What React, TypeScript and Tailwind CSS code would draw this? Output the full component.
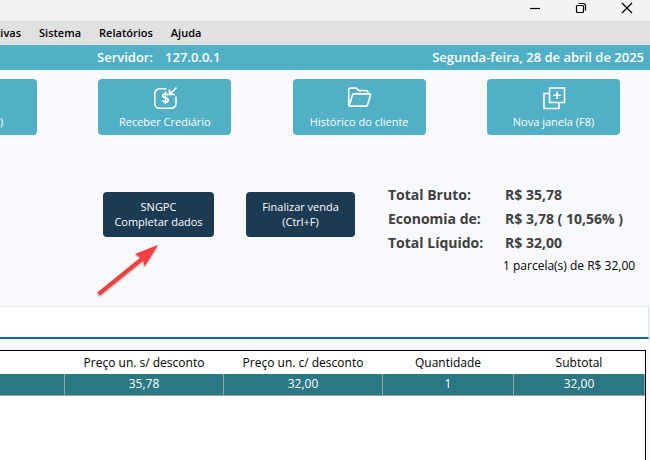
import type { ReactNode } from "react";

const columns = [
  { label: "Preço un. s/ desconto", value: "35,78", width: "w-[159px]" },
  { label: "Preço un. c/ desconto", value: "32,00", width: "w-[159px]" },
  { label: "Quantidade", value: "1", width: "w-[131px]" },
  { label: "Subtotal", value: "32,00", width: "w-[131px]" },
];

const totals = [
  { label: "Total Bruto:", value: "R$ 35,78" },
  { label: "Economia de:", value: "R$ 3,78 ( 10,56% )" },
  { label: "Total Líquido:", value: "R$ 32,00" },
];

export default function App() {
  return (
    <div className="flex min-h-screen flex-col overflow-hidden bg-[#f8f9fc] font-['Open_Sans','Noto_Sans',sans-serif] text-[11px] text-black">
      <TitleBar />

      <nav className="flex h-6 items-center gap-[18px] bg-[#e1e1e1] font-semibold">
        <button type="button" className="-ml-1">tivas</button>
        <button type="button">Sistema</button>
        <button type="button">Relatórios</button>
        <button type="button">Ajuda</button>
      </nav>

      <header className="flex h-[25px] items-center justify-between bg-[#51afc6] pr-1.5 pl-[97px] text-[13px] font-semibold text-white">
        <div className="flex gap-3">
          <span>Servidor:</span>
          <span>127.0.0.1</span>
        </div>
        <span>Segunda-feira, 28 de abril de 2025</span>
      </header>

      <div className="mt-[9px] flex justify-between pr-[30px]">
        <button type="button" className="flex h-14 w-[37px] items-end rounded-r bg-[#51afc6] pb-[5px] text-white">
          )
        </button>
        <Shortcut label="Receber Crediário"><ReceiveIcon /></Shortcut>
        <Shortcut label="Histórico do cliente"><FolderIcon /></Shortcut>
        <Shortcut label="Nova janela (F8)"><NewWindowIcon /></Shortcut>
      </div>

      <section className="mt-12 flex items-start pl-[103px]">
        <div className="relative mt-[9px] mr-8">
          <button type="button" className="h-[45px] w-[111px] rounded bg-[#1c3a52] pb-0.5 leading-[15px] text-white">
            SNGPC
            <br />
            Completar dados
          </button>
          <PointerArrow />
        </div>
        <button type="button" className="mt-[9px] mr-[33px] h-[45px] w-[109px] rounded bg-[#1c3a52] pb-0.5 leading-[15px] text-white">
          Finalizar venda
          <br />
          (Ctrl+F)
        </button>

        <div className="h-[123px]">
          <dl className="text-sm leading-6 font-bold text-[#404040]">
            {totals.map((t) => (
              <div key={t.label} className="flex">
                <dt className="w-[117px]">{t.label}</dt>
                <dd className="whitespace-nowrap">{t.value}</dd>
              </div>
            ))}
          </dl>
          <p className="pl-[115px] text-xs leading-[22px] whitespace-nowrap">1 parcela(s) de R$ 32,00</p>
        </div>
      </section>

      <input
        type="text"
        aria-label="Produto"
        className="mr-px h-[33px] border-t border-r border-b-2 border-t-[#e8e8ea] border-r-[#dfe5ea] border-b-[#0067c0] bg-white px-2 outline-none"
      />

      <div className="mt-[11px] mr-1 grow border-t border-r border-black bg-white">
        <table className="w-full table-fixed border-collapse text-center text-xs">
          <thead>
            <tr className="h-[23px]">
              <th />
              {columns.map((c) => (
                <th key={c.label} className={`${c.width} p-0 font-normal`}>{c.label}</th>
              ))}
            </tr>
          </thead>
          <tbody>
            <tr className="h-[21px] bg-[#2b7885] text-white">
              <td className="border-r border-b border-[#a0a0a0] p-0" />
              {columns.map((c) => (
                <td key={c.label} className="border-r border-b border-[#a0a0a0] p-0">{c.value}</td>
              ))}
            </tr>
          </tbody>
        </table>
      </div>
    </div>
  );
}

function TitleBar() {
  return (
    <div className="flex h-[21px] justify-end bg-[#f3f3f3]">
      <WindowButton label="Minimizar">
        <path d="M1 6.500h10" />
      </WindowButton>
      <WindowButton label="Restaurar">
        <path d="M2.500 3.500h5a1 1 0 0 1 1 1v5a1 1 0 0 1-1 1h-5a1 1 0 0 1-1-1v-5a1 1 0 0 1 1-1z" />
        <path d="M3.500 1.500h4.500a2.500 2.500 0 0 1 2.500 2.500v4.500" />
      </WindowButton>
      <WindowButton label="Fechar">
        <path d="M1 1l10 10M11 1L1 11" />
      </WindowButton>
    </div>
  );
}

function WindowButton({ label, children }: { label: string; children: ReactNode }) {
  return (
    <button type="button" aria-label={label} className="flex w-[46px] justify-center pt-0.5">
      <svg className="size-3" viewBox="0 0 12 12" fill="none" stroke="#000" strokeWidth="1.2">
        {children}
      </svg>
    </button>
  );
}

function Shortcut({ label, children }: { label: string; children: ReactNode }) {
  return (
    <button type="button" className="flex h-14 w-[133px] flex-col items-center justify-between rounded bg-[#51afc6] pt-[7px] pb-[5px] text-white">
      <svg className="h-6 w-[25px]" viewBox="0 0 25 24" fill="none" stroke="#fff" strokeWidth="1.6">
        {children}
      </svg>
      {label}
    </button>
  );
}

function ReceiveIcon() {
  return (
    <>
      <path d="M14.500 2.800H7.500A4.700 4.700 0 0 0 2.800 7.500v10a4.700 4.700 0 0 0 4.700 4.700h11.800a4.700 4.700 0 0 0 4.700-4.700V10.500" />
      <path d="M24.500 1.500L18 8M17.500 3.500v5h5.500" />
      <path d="M13.500 5.500v12.800M16.300 9.300c-.4-1.100-1.400-1.600-2.800-1.600-1.700 0-2.800.8-2.800 2 0 3 5.600 1.400 5.600 4.300 0 1.300-1.200 2.100-2.900 2.100-1.600 0-2.600-.6-2.900-1.800" />
    </>
  );
}

function FolderIcon() {
  return (
    <g strokeLinejoin="round">
      <path d="M1.700 19.500V3.500a1.400 1.400 0 0 1 1.400-1.400h6.200l2.600 2.500H19.500a1.400 1.400 0 0 1 1.400 1.400V8" />
      <path d="M2 20.100L5.500 8.900a1.400 1.400 0 0 1 1.300-1H22.700a.8.800 0 0 1 .8 1l-3 10.100a1.500 1.500 0 0 1-1.400 1.100z" />
    </g>
  );
}

function NewWindowIcon() {
  return (
    <>
      <path d="M8.500 2h15v14.500h-15z" />
      <path d="M8.500 7.500H3v15h15v-6" />
      <path d="M16 5.500v7.500M12.300 9.300h7.400" />
    </>
  );
}

function PointerArrow() {
  return (
    <svg className="absolute top-[52px] -left-2 h-[54px] w-[66px]" viewBox="0 0 66 54">
      <path
        d="M63 1L40 10L45.500 13.500L2.300 48.500L4.800 51.500L48.300 16.500L49.500 22.500z"
        fill="#f43f3f"
        className="drop-shadow-[0_1px_1px_rgba(0,0,0,0.4)]"
      />
    </svg>
  );
}
